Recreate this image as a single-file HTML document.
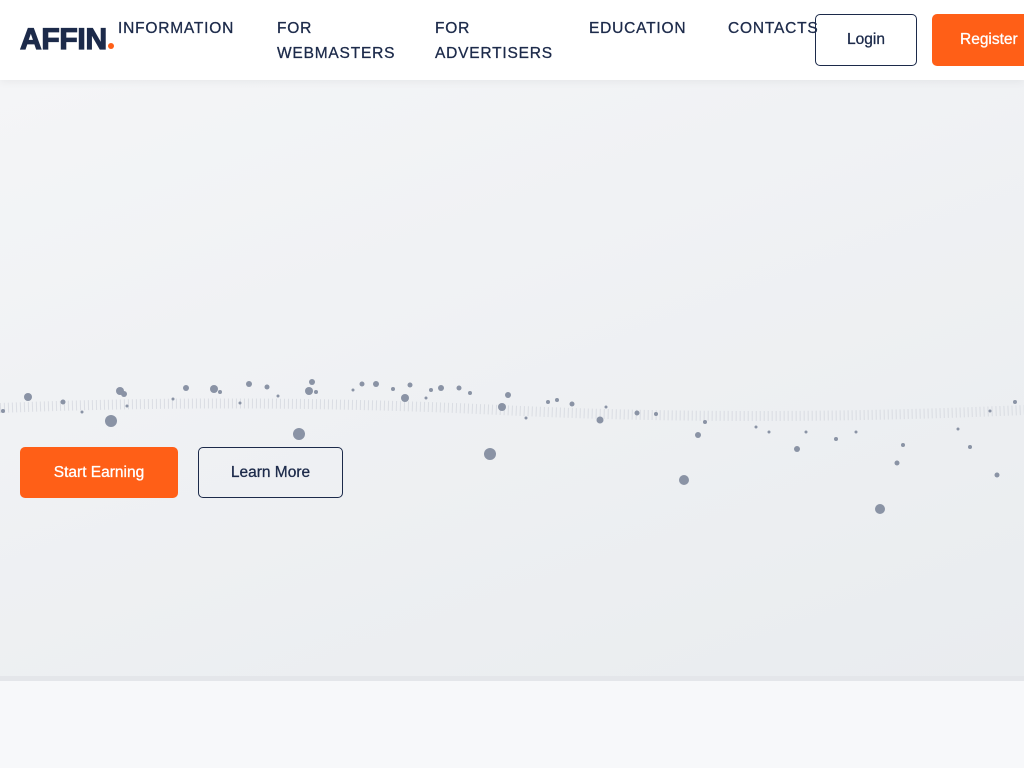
<!DOCTYPE html>
<html><head><meta charset="utf-8"><style>
*{margin:0;padding:0;box-sizing:border-box}
body{width:1024px;height:768px;overflow:hidden;background:#f7f8fa;font-family:"Liberation Sans",sans-serif;position:relative}
.hdr{position:absolute;left:0;top:0;width:1024px;height:80px;background:#fff;box-shadow:0 2px 8px rgba(0,0,0,.05);z-index:2}
.logo{position:absolute;left:20px;top:23px;font-size:30px;font-weight:900;color:#1c2a4a;letter-spacing:-0.3px;-webkit-text-stroke:1.2px #1c2a4a}
.logo i{display:inline-block;width:6px;height:6px;background:#ff5f17;border-radius:50%;margin-left:1px;-webkit-text-stroke:0}
.nav{position:absolute;top:16px;font-size:15.5px;color:#1c2a4a;letter-spacing:0.8px;line-height:25px;-webkit-text-stroke:0.3px #1c2a4a}
.btn{position:absolute;border-radius:5px;font-size:15.5px;display:flex;align-items:center;justify-content:center;-webkit-text-stroke:0.3px currentColor}
.hero{position:absolute;left:0;top:80px;width:1024px;height:596px;background:linear-gradient(160deg,#f4f5f7,#e9ecef)}
.sep{position:absolute;left:0;top:676px;width:1024px;height:5px;background:#e4e6ea}
</style></head><body>
<div class="hdr">
<div class="logo">AFFIN<i></i></div>
<div class="nav" style="left:118px">INFORMATION</div>
<div class="nav" style="left:277px">FOR<br>WEBMASTERS</div>
<div class="nav" style="left:435px">FOR<br>ADVERTISERS</div>
<div class="nav" style="left:589px">EDUCATION</div>
<div class="nav" style="left:728px">CONTACTS</div>
<div class="btn" style="left:815px;top:14px;width:102px;height:52px;border:1px solid #1c2a4a;color:#1c2a4a">Login</div>
<div class="btn" style="left:932px;top:14px;width:110px;height:52px;background:#ff5f17;color:#fff;justify-content:flex-start;padding-left:28px">Register</div>
</div>
<div class="hero">
<svg width="1024" height="596" style="position:absolute;left:0;top:0">
<path d="M0 328 Q250 318 500 330 T1024 330" stroke="#c5cad3" stroke-width="10" fill="none" stroke-dasharray="1 3" opacity=".5"/>
<g fill="#8a93a5">
<circle cx="28" cy="317" r="4"/><circle cx="111" cy="341" r="6"/><circle cx="120" cy="311" r="4"/><circle cx="124" cy="314" r="3"/><circle cx="63" cy="322" r="2.5"/><circle cx="186" cy="308" r="3"/><circle cx="214" cy="309" r="4"/><circle cx="220" cy="312" r="2"/><circle cx="249" cy="304" r="3"/><circle cx="267" cy="307" r="2.5"/><circle cx="299" cy="354" r="6"/><circle cx="309" cy="311" r="4"/><circle cx="312" cy="302" r="3"/><circle cx="316" cy="312" r="2"/><circle cx="362" cy="304" r="2.5"/><circle cx="376" cy="304" r="3"/><circle cx="393" cy="309" r="2"/><circle cx="405" cy="318" r="4"/><circle cx="410" cy="305" r="2.5"/><circle cx="431" cy="310" r="2"/><circle cx="441" cy="308" r="3"/><circle cx="459" cy="308" r="2.5"/><circle cx="470" cy="313" r="2"/><circle cx="490" cy="374" r="6"/><circle cx="502" cy="327" r="4"/><circle cx="508" cy="315" r="3"/><circle cx="548" cy="322" r="2"/><circle cx="557" cy="320" r="2"/><circle cx="572" cy="324" r="2.5"/><circle cx="600" cy="340" r="3.5"/><circle cx="637" cy="333" r="2.5"/><circle cx="656" cy="334" r="2"/><circle cx="684" cy="400" r="5"/><circle cx="698" cy="355" r="3"/><circle cx="705" cy="342" r="2"/><circle cx="797" cy="369" r="3"/><circle cx="836" cy="359" r="2"/><circle cx="880" cy="429" r="5"/><circle cx="897" cy="383" r="2.5"/><circle cx="903" cy="365" r="2"/><circle cx="970" cy="367" r="2"/><circle cx="997" cy="395" r="2.5"/><circle cx="1015" cy="322" r="2"/><circle cx="3" cy="331" r="2"/><circle cx="82" cy="332" r="1.5"/><circle cx="127" cy="326" r="1.5"/><circle cx="173" cy="319" r="1.5"/><circle cx="240" cy="323" r="1.5"/><circle cx="278" cy="316" r="1.5"/><circle cx="353" cy="310" r="1.5"/><circle cx="426" cy="318" r="1.5"/><circle cx="526" cy="338" r="1.5"/><circle cx="606" cy="327" r="1.5"/><circle cx="756" cy="347" r="1.5"/><circle cx="769" cy="352" r="1.5"/><circle cx="806" cy="352" r="1.5"/><circle cx="856" cy="352" r="1.5"/><circle cx="958" cy="349" r="1.5"/><circle cx="990" cy="331" r="1.5"/>
</g>
</svg>
<div class="btn" style="left:20px;top:367px;width:158px;height:51px;background:#ff5f17;color:#fff">Start Earning</div>
<div class="btn" style="left:198px;top:367px;width:145px;height:51px;border:1px solid #1c2a4a;color:#1c2a4a">Learn More</div>
</div>
<div class="sep"></div>
</body></html>
